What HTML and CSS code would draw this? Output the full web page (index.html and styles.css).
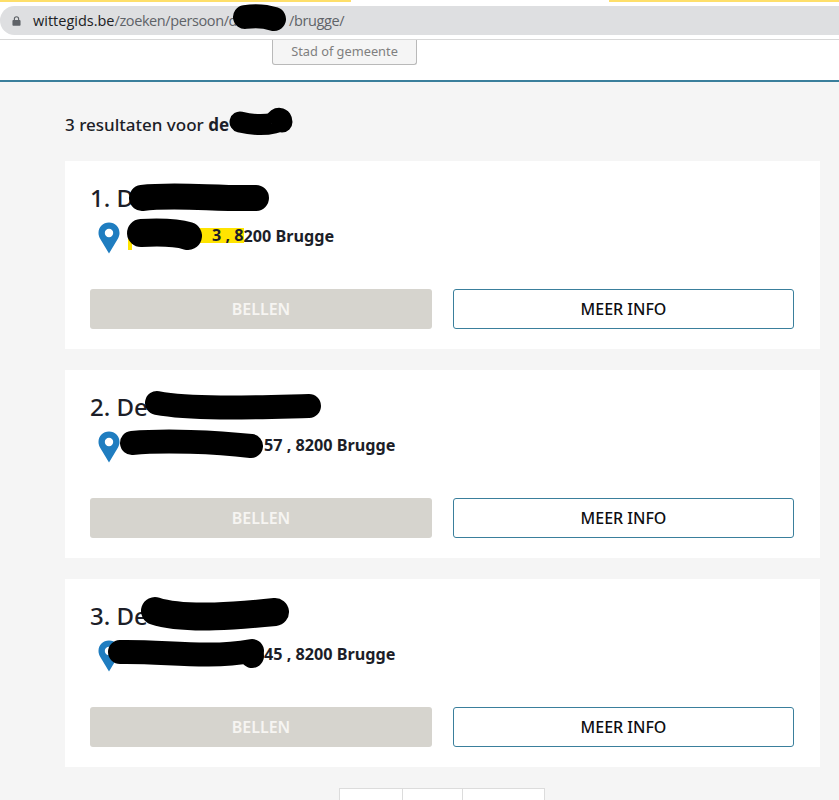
FILE: index.html
```html
<!DOCTYPE html>
<html lang="nl">
<head>
<meta charset="utf-8">
<title>wittegids.be</title>
<link rel="stylesheet" href="styles.css">
</head>
<body>
<div class="chrome">
  <div class="loadbars"><span class="loadbar loadbar-left"></span><span class="loadbar loadbar-right"></span></div>
  <div class="urlbar">
    <svg class="lock" viewBox="0 0 10 12"><path d="M2 5V3.6a3 3 0 0 1 6 0V5h.6c.5 0 .9.4.9.9v4.6c0 .5-.4.9-.9.9H1.400c-.5 0-.9-.4-.9-.9V5.900c0-.5.4-.9.9-.9zm1.300 0h3.400V3.600a1.700 1.700 0 0 0-3.400 0z"/></svg>
    <span class="url"><span class="domain">wittegids.be</span><span class="path">/zoeken/persoon/d</span><span class="url-hidden"></span><span class="path">/brugge/</span></span>
    <svg class="scribble" viewBox="0 0 839 40"><path d="M245 17C258 15 268 17 274 19"/></svg>
  </div>
</div>
<header class="search">
  <button class="city">Stad of gemeente</button>
</header>
<main class="content">
  <h1 class="summary">3 resultaten voor <b>de</b><svg class="scribble-summary" viewBox="0 0 70 30"><path d="M12 16C25 19 38 19 46 17C50 10 54 12 54 16"/></svg></h1>

  <article class="card">
    <h2 class="name">1. D</h2>
    <p class="address"><svg class="pin" viewBox="0 0 22 32"><path fill-rule="evenodd" d="M11 .5C5 .5.500 5 .500 11c0 2 .6 3.800 1.500 5.400L11 31.500l9-15.100c.9-1.600 1.500-3.400 1.500-5.400C21.500 5 17 .500 11 .500zm0 6.300a4.200 4.200 0 1 1 0 8.400 4.200 4.200 0 0 1 0-8.400z"/></svg><span class="street street-1"><mark class="hl">3 , 8</mark>200 Brugge</span></p>
    <div class="actions"><a class="btn btn-call">BELLEN</a><a class="btn btn-info">MEER INFO</a></div>
    <svg class="scribble" viewBox="0 0 755 188"><path class="s26" d="M77 37C110 33 150 38 191 37"/><path class="s28" d="M76 72C95 71 110 71 123 75"/></svg>
  </article>

  <article class="card">
    <h2 class="name">2. De</h2>
    <p class="address"><svg class="pin" viewBox="0 0 22 32"><path fill-rule="evenodd" d="M11 .5C5 .5.500 5 .500 11c0 2 .6 3.800 1.500 5.400L11 31.500l9-15.100c.9-1.600 1.500-3.400 1.500-5.400C21.500 5 17 .500 11 .500zm0 6.300a4.200 4.200 0 1 1 0 8.400 4.200 4.200 0 0 1 0-8.400z"/></svg><span class="street street-2">57 , 8200 Brugge</span></p>
    <div class="actions"><a class="btn btn-call">BELLEN</a><a class="btn btn-info">MEER INFO</a></div>
    <svg class="scribble" viewBox="0 0 755 188"><path class="s24" d="M92 33C130 40 200 37 244 36"/><path class="s24" d="M67 73C100 70 150 72 186 76"/></svg>
  </article>

  <article class="card">
    <h2 class="name">3. De</h2>
    <p class="address"><svg class="pin" viewBox="0 0 22 32"><path fill-rule="evenodd" d="M11 .5C5 .5.500 5 .500 11c0 2 .6 3.800 1.500 5.400L11 31.500l9-15.100c.9-1.600 1.500-3.400 1.500-5.400C21.500 5 17 .500 11 .500zm0 6.300a4.200 4.200 0 1 1 0 8.400 4.200 4.200 0 0 1 0-8.400z"/></svg><span class="street street-3">45 , 8200 Brugge</span></p>
    <div class="actions"><a class="btn btn-call">BELLEN</a><a class="btn btn-info">MEER INFO</a></div>
    <svg class="scribble" viewBox="0 0 755 188"><path class="s28" d="M90 32C120 42 180 36 210 33"/><path class="s24" d="M55 73C100 72 140 80 187 72"/><path class="s24" d="M186 75L187 77"/></svg>
  </article>

  <nav class="pager"><span class="page page-a"></span><span class="page page-b"></span><span class="page page-c"></span></nav>
</main>
</body>
</html>
```
FILE: styles.css
```css
* { box-sizing: border-box; }
html, body { margin: 0; height: 800px; overflow: hidden; }
body { background: #f5f5f5; font-family: "Noto Sans", "Open Sans", sans-serif; color: #1c1e28; }

.chrome { position: relative; height: 40px; background: #fff; border-bottom: 1px solid #d8d8d8; }
.loadbars { position: relative; height: 6px; }
.loadbar { position: absolute; top: 0; height: 1.5px; background: #fedf6a; }
.loadbar-left { left: 0; width: 351px; }
.loadbar-right { left: 609px; right: 0; }
.urlbar { position: relative; height: 29px; background: #dedfe1; border-radius: 15px 0 0 15px; display: flex; align-items: center; padding-left: 12px; }
.lock { width: 9px; height: 12px; fill: #5f6368; margin-right: 12px; }
.url { font-family: "Open Sans", sans-serif; font-size: 14.500px; color: #5f6368; white-space: nowrap; }
.domain { color: #202124; }
.path { letter-spacing: -0.400px; }
.url-hidden { display: inline-block; width: 52px; }
.urlbar .scribble { top: -6px; left: 0; width: 839px; height: 40px; }
.urlbar .scribble path { stroke-width: 24px; }

.search { height: 42px; background: #fff; border-bottom: 2px solid #3a7f9c; padding-left: 272px; }
.city { display: block; width: 145px; height: 25px; margin: 0; padding: 0 0 2px; background: #f5f5f5; border: 1px solid #b9b9b9; border-top: 0; border-radius: 0 0 3px 3px; color: #7f7f7f; font: 12.800px "Noto Sans", sans-serif; }

.content { padding: 0 19px 0 65px; position: relative; }
.summary { position: relative; margin: 0; height: 79px; padding-top: 31px; font-size: 17px; line-height: 24px; font-weight: 500; }
.summary b { font-weight: 700; }
.scribble-summary { position: absolute; left: 163px; top: 24px; width: 70px; height: 30px; fill: none; stroke: #000; stroke-width: 21px; stroke-linecap: round; }

.card { position: relative; height: 188px; margin-bottom: 21px; padding: 21px 26px 0 25px; background: #fff; }
.name { margin: 0; height: 32px; font-size: 24px; line-height: 32px; font-weight: 500; color: #1c1e28; }
.address { display: flex; align-items: flex-start; margin: 8px 0 0 8px; height: 67px; font-size: 16.200px; font-weight: 700; line-height: 24px; }
.pin { flex: none; width: 22px; height: 32px; fill: #1f7dc0; }
.street { display: block; padding-top: 2px; }
.street-1 { margin-left: 8px; }
.street-2 { margin-left: 144px; }
.street-3 { margin-left: 144px; }
.hl { position: relative; display: inline-block; height: 15px; line-height: 15px; margin-top: 4px; padding-left: 84px; background: #ffe400; color: inherit; vertical-align: top; }
.hl::before { content: ""; position: absolute; left: 0; top: 0; width: 4px; height: 22px; background: #ffe400; }

.actions { display: flex; gap: 21px; }
.btn { display: flex; align-items: center; justify-content: center; height: 40px; border-radius: 3px; font-size: 16px; font-weight: 500; }
.btn-call { flex: 0 0 342px; background: #d6d4ce; color: #f6f5f2; font-weight: 600; }
.btn-info { flex: 0 0 341px; background: #fff; border: 1px solid #3a7f9c; color: #0e0e12; }

.scribble { position: absolute; left: 0; top: 0; width: 100%; height: 100%; fill: none; stroke: #000; stroke-linecap: round; stroke-linejoin: round; pointer-events: none; }
.s24 { stroke-width: 24px; }
.s26 { stroke-width: 26px; }
.s28 { stroke-width: 28px; }

.pager { display: flex; margin-left: 274px; }
.page { height: 40px; background: #fff; border: 1px solid #dcdcdc; border-left-width: 0; }
.page-a { width: 64px; border-left-width: 1px; }
.page-b { width: 60px; }
.page-c { width: 82px; }
```
